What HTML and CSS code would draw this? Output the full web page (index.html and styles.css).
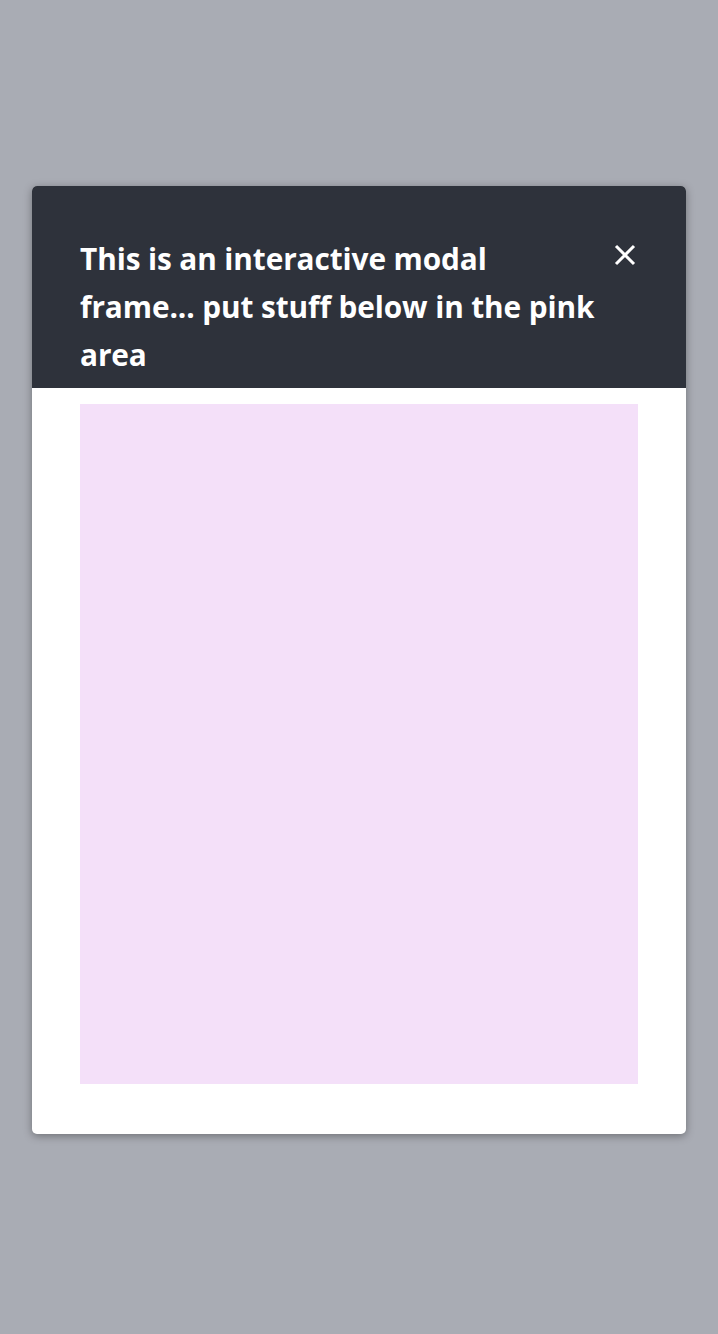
FILE: index.html
```html
<!DOCTYPE html>
<html lang="en">
<head>
<meta charset="utf-8">
<title>Modal</title>
<link rel="stylesheet" href="styles.css">
</head>
<body>
<div class="page">
  <div class="modal">
    <div class="modal-header">
      <h1 class="modal-title">This is an interactive modal<br>frame... put stuff below in the pink<br>area</h1>
      <button class="close" aria-label="Close">
        <svg width="22" height="22" viewBox="0 0 22 22"><path d="M2 2 L20 20 M20 2 L2 20" stroke="#fff" stroke-width="3" fill="none"/></svg>
      </button>
    </div>
    <div class="modal-body">
      <div class="pink"></div>
    </div>
  </div>
</div>
</body>
</html>
```
FILE: styles.css
```css
html, body {
  margin: 0;
  padding: 0;
  background: #a9acb4;
  height: 100%;
}
.page {
  padding: 186px 32px 0;
}
.modal {
  background: #fff;
  border-radius: 5px;
  overflow: hidden;
  box-shadow: 0 2px 8px rgba(0,0,0,0.35);
}
.modal-header {
  background: #2e323b;
  display: flex;
  align-items: flex-start;
  padding: 49px 48px 9px 48px;
  gap: 10px;
}
.modal-title {
  margin: 0;
  flex: 1;
  color: #fff;
  font-family: "Open Sans", sans-serif;
  font-weight: 700;
  font-size: 29.8px;
  letter-spacing: -0.1px;
  line-height: 48px;
}
.close {
  background: none;
  border: 0;
  padding: 0;
  margin: 9px 2px 0 0;
  width: 22px;
  height: 22px;
  display: block;
  cursor: pointer;
}
.close svg { display: block; }
.modal-body {
  padding: 16px 48px 50px;
}
.pink {
  background: #f4e0f9;
  height: 680px;
}
```
